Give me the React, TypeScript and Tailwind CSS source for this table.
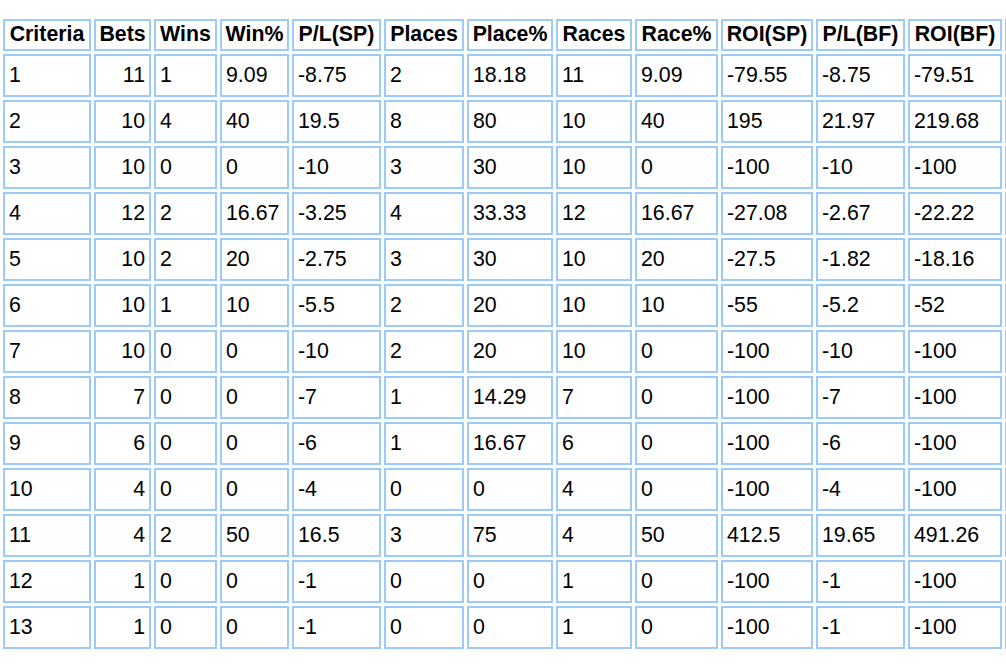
import React from 'react';

const headers = [
    { label: 'Criteria', w: 'w-[88px]' },
    { label: 'Bets', w: 'w-[57px]' },
    { label: 'Wins', w: 'w-[63px]' },
    { label: 'Win%', w: 'w-[69px]' },
    { label: 'P/L(SP)', w: 'w-[89px]' },
    { label: 'Places', w: 'w-[80px]' },
    { label: 'Place%', w: 'w-[86px]' },
    { label: 'Races', w: 'w-[76px]' },
    { label: 'Race%', w: 'w-[83px]' },
    { label: 'ROI(SP)', w: 'w-[92px]' },
    { label: 'P/L(BF)', w: 'w-[89px]' },
    { label: 'ROI(BF)', w: 'w-[94px]' },
];

const rows = [
    ['1', '11', '1', '9.09', '-8.75', '2', '18.18', '11', '9.09', '-79.55', '-8.75', '-79.51'],
    ['2', '10', '4', '40', '19.5', '8', '80', '10', '40', '195', '21.97', '219.68'],
    ['3', '10', '0', '0', '-10', '3', '30', '10', '0', '-100', '-10', '-100'],
    ['4', '12', '2', '16.67', '-3.25', '4', '33.33', '12', '16.67', '-27.08', '-2.67', '-22.22'],
    ['5', '10', '2', '20', '-2.75', '3', '30', '10', '20', '-27.5', '-1.82', '-18.16'],
    ['6', '10', '1', '10', '-5.5', '2', '20', '10', '10', '-55', '-5.2', '-52'],
    ['7', '10', '0', '0', '-10', '2', '20', '10', '0', '-100', '-10', '-100'],
    ['8', '7', '0', '0', '-7', '1', '14.29', '7', '0', '-100', '-7', '-100'],
    ['9', '6', '0', '0', '-6', '1', '16.67', '6', '0', '-100', '-6', '-100'],
    ['10', '4', '0', '0', '-4', '0', '0', '4', '0', '-100', '-4', '-100'],
    ['11', '4', '2', '50', '16.5', '3', '75', '4', '50', '412.5', '19.65', '491.26'],
    ['12', '1', '0', '0', '-1', '0', '0', '1', '0', '-100', '-1', '-100'],
    ['13', '1', '0', '0', '-1', '0', '0', '1', '0', '-100', '-1', '-100'],
];

const cell = 'border-2 border-[#9dcaf6] py-0 whitespace-nowrap leading-none';

const App = () => {
    return (
        <div className="w-[1006px] h-[664px] overflow-hidden bg-white pt-[16px] font-['Liberation_Sans',Arial,sans-serif] text-[21.33px] text-black">
            <table className="border-separate border-spacing-[3px] table-fixed w-max">
                <thead>
                    <tr className="h-[32px]">
                        {headers.map((h) => (
                            <th key={h.label} className={`${h.w} ${cell} px-[3px] font-bold text-center`}>
                                {h.label}
                            </th>
                        ))}
                        {/* next column runs off the right edge, only its border shows */}
                        <th className={`w-[90px] ${cell}`}></th>
                    </tr>
                </thead>
                <tbody>
                    {rows.map((r) => (
                        <tr key={r[0]} className="h-[43px]">
                            {r.map((v, i) => (
                                <td key={i} className={`${cell} px-[4px] ${i === 1 ? 'text-right' : 'text-left'}`}>
                                    {v}
                                </td>
                            ))}
                            <td className={cell}></td>
                        </tr>
                    ))}
                </tbody>
            </table>
        </div>
    );
};

export default App;
